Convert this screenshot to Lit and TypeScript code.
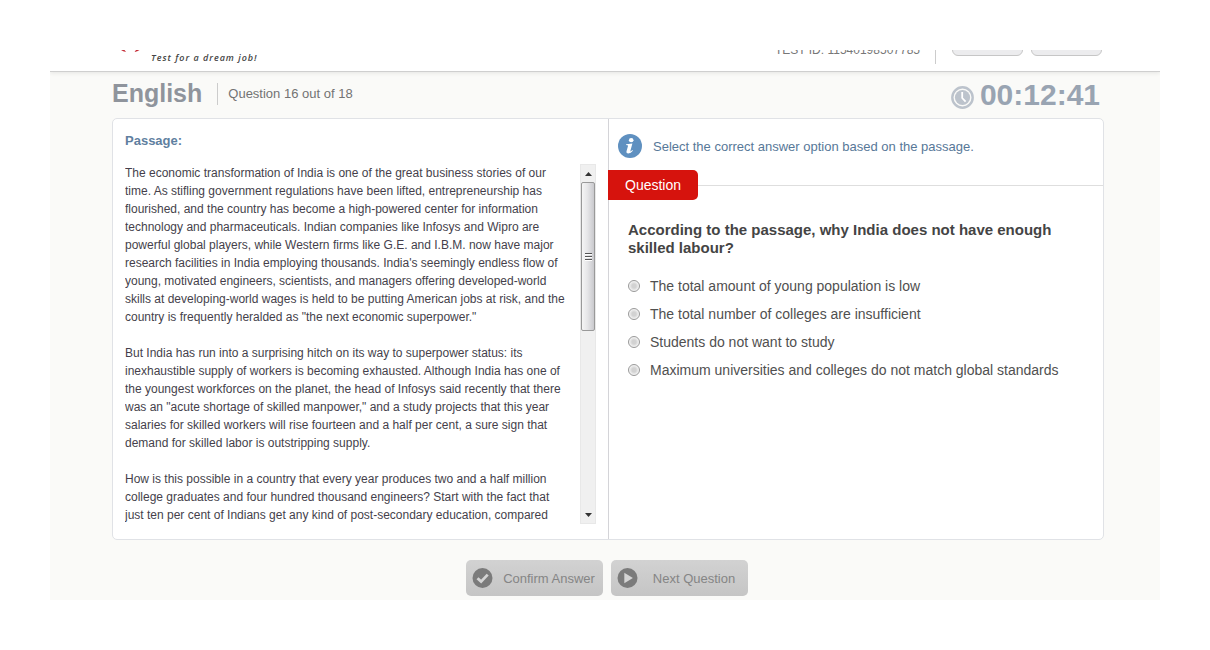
import { LitElement, html, css } from "lit";
import { customElement, state } from "lit/decorators.js";

const passage = [
  `The economic transformation of India is one of the great business stories of our
time. As stifling government regulations have been lifted, entrepreneurship has
flourished, and the country has become a high-powered center for information
technology and pharmaceuticals. Indian companies like Infosys and Wipro are
powerful global players, while Western firms like G.E. and I.B.M. now have major
research facilities in India employing thousands. India's seemingly endless flow of
young, motivated engineers, scientists, and managers offering developed-world
skills at developing-world wages is held to be putting American jobs at risk, and the
country is frequently heralded as "the next economic superpower."`,
  `But India has run into a surprising hitch on its way to superpower status: its
inexhaustible supply of workers is becoming exhausted. Although India has one of
the youngest workforces on the planet, the head of Infosys said recently that there
was an "acute shortage of skilled manpower," and a study projects that this year
salaries for skilled workers will rise fourteen and a half per cent, a sure sign that
demand for skilled labor is outstripping supply.`,
  `How is this possible in a country that every year produces two and a half million
college graduates and four hundred thousand engineers? Start with the fact that
just ten per cent of Indians get any kind of post-secondary education, compared`,
];

const options = [
  "The total amount of young population is low",
  "The total number of colleges are insufficient",
  "Students do not want to study",
  "Maximum universities and colleges do not match global standards",
];

@customElement("app-root")
class AppRoot extends LitElement {
  @state() private selected = -1;

  static styles = css`
    :host {
      display: block;
      min-height: 100vh;
      padding: 50px;
      box-sizing: border-box;
      background: #fff;
      font-family: "Liberation Sans", Arial, sans-serif;
      font-size: 13px;
      color: #444;
    }
    * { box-sizing: border-box; }
    button { font-family: inherit; border: 0; padding: 0; cursor: pointer; }
    svg { display: block; flex: none; }
    .frame { background: #fafaf8; overflow: hidden; }
    .top {
      display: flex;
      align-items: flex-end;
      height: 22px;
      padding: 0 58px 0 70px;
      overflow: hidden;
      background: #fff;
      border-bottom: 1px solid #cfcfcf;
      box-shadow: 0 1px 4px #e4e4e2;
    }
    .logo { align-self: flex-start; }
    .tagline {
      margin-left: 10px;
      padding-bottom: 6px;
      font: italic 600 9px/14px "Open Sans", sans-serif;
      letter-spacing: 1px;
      color: #444;
      flex: 1;
      white-space: nowrap;
    }
    .test-id {
      font-size: 12px;
      line-height: 14px;
      padding-bottom: 14px;
      color: #777;
      white-space: nowrap;
    }
    .rule { width: 1px; height: 30px; margin: 0 16px 7px 15px; background: #ccc; flex: none; }
    .tool {
      width: 71px;
      height: 26px;
      margin: 0 0 15px;
      flex: none;
      border: 1px solid #c6c6c6;
      border-radius: 6px;
      background: #ececee;
    }
    .tool + .tool { margin-left: 8px; }
    .body { padding: 0 56px 4px 62px; }
    .heading { display: flex; align-items: center; height: 46px; padding-right: 4px; }
    h1 { margin: 0; font-size: 25px; line-height: 30px; color: #8f949c; padding-bottom: 4px; }
    .count {
      margin-left: 15px;
      padding-left: 10px;
      border-left: 1px solid #ccc;
      line-height: 22px;
      margin-bottom: 2px;
      color: #737373;
      flex: 1;
    }
    .clock { margin: 4px 6px 0 0; }
    .time { font-size: 30px; font-weight: bold; line-height: 34px; color: #99a4b2; }
    .panel {
      display: grid;
      grid-template-columns: 1fr 1fr;
      background: #fff;
      border: 1px solid #e0e2e6;
      border-radius: 5px;
    }
    .left { padding: 14px 12px 15px; min-width: 0; }
    .left h2 { margin: 0 0 16px; font-size: 13px; line-height: 15px; color: #5f7fa0; }
    .scroller { display: flex; height: 360px; }
    .text { flex: 1; min-width: 0; overflow: hidden; font-size: 12px; line-height: 18px; color: #453f4b; }
    .text p { margin: 0 0 18px; white-space: pre-line; }
    .bar {
      width: 16px;
      display: flex;
      flex-direction: column;
      background: #f0f0f0;
      border: 1px solid #e8e8e8;
      flex: none;
    }
    .arrow { height: 17px; background: none; display: grid; place-items: center; }
    .thumb {
      height: 149px;
      border: 1px solid #999;
      border-radius: 2px;
      background: linear-gradient(90deg, #f5f5f5, #e6e6e8 45%, #c9c9cd);
      display: grid;
      place-items: center;
    }
    .track { flex: 1; }
    .right { border-left: 1px solid #d4d4d8; min-width: 0; }
    .info { display: flex; align-items: center; gap: 11px; padding: 15px 9px 12px; color: #577898; }
    .divider { display: flex; align-items: center; }
    .divider::after { content: ""; flex: 1; height: 1px; background: #dedede; }
    .tag {
      margin-left: -1px;
      padding: 0 17px;
      font-size: 14px;
      line-height: 30px;
      color: #fff;
      background: #d6130d;
      border-radius: 0 5px 5px 0;
    }
    fieldset { border: 0; margin: 0; padding: 0 19px; min-width: 0; }
    legend { padding: 21px 0 15px; font-size: 15px; line-height: 18px; font-weight: bold; color: #444; }
    .option { display: flex; align-items: center; height: 28px; font-size: 14px; color: #505050; }
    .option input {
      appearance: none;
      width: 12px;
      height: 12px;
      margin: 0 10px 0 0;
      flex: none;
      border: 1px solid #999;
      border-radius: 50%;
      background: radial-gradient(circle, #d2d2d2 0 2px, #dedede 3px, #f6f6f6 5px);
    }
    .option input:checked { background: radial-gradient(circle, #444 0 2px, #eee 3px); }
    .actions { display: flex; justify-content: center; gap: 8px; padding: 20px 2px 0 0; }
    .action {
      display: flex;
      align-items: center;
      width: 137px;
      height: 36px;
      padding: 0 6px;
      border-radius: 5px;
      background: linear-gradient(#d2d2d2, #c5c5c5);
      color: #858585;
      font-size: 13px;
      white-space: nowrap;
    }
    .action span { flex: 1; text-align: center; padding-left: 8px; }
  `;

  private scrollText(by: number) {
    this.renderRoot.querySelector(".text")?.scrollBy(0, by);
  }

  render() {
    return html`
      <div class="frame">
        <header class="top">
          <svg class="logo" width="21" height="3" viewBox="0 0 21 3">
            <path d="M1 0h3.5l1.5 2Q3 1.6 1 0zM19.500 0h-3.500l-1.500 2q3-.4 5-2z" fill="#c42b35" />
          </svg>
          <div class="tagline">Test for a dream job!</div>
          <div class="test-id">TEST ID: 11540198507785</div>
          <div class="rule"></div>
          <button class="tool"></button>
          <button class="tool"></button>
        </header>
        <main class="body">
          <div class="heading">
            <h1>English</h1>
            <div class="count">Question 16 out of 18</div>
            <svg class="clock" width="23" height="23" viewBox="0 0 23 23">
              <circle cx="11.5" cy="11.5" r="10.2" fill="#fafaf8" stroke="#bcc3cc" stroke-width="2.4" />
              <circle cx="11.5" cy="11.5" r="7.6" fill="#bcc3cc" />
              <path d="M11.2 6v6l3.4 3.6" fill="none" stroke="#fff" stroke-width="1.8" />
            </svg>
            <div class="time">00:12:41</div>
          </div>
          <div class="panel">
            <section class="left">
              <h2>Passage:</h2>
              <div class="scroller">
                <div class="text">${passage.map((p) => html`<p>${p}</p>`)}</div>
                <div class="bar">
                  <button class="arrow" aria-label="Scroll up" @click=${() => this.scrollText(-18)}>
                    <svg width="7" height="4" viewBox="0 0 7 4"><path d="M3.5 0L7 4H0z" fill="#333" /></svg>
                  </button>
                  <div class="thumb">
                    <svg width="7" height="8" viewBox="0 0 7 8">
                      <path d="M0 .5h7M0 3.5h7M0 6.5h7" stroke="#555" />
                      <path d="M0 1.5h7M0 4.5h7M0 7.5h7" stroke="#fff" />
                    </svg>
                  </div>
                  <div class="track"></div>
                  <button class="arrow" aria-label="Scroll down" @click=${() => this.scrollText(18)}>
                    <svg width="7" height="4" viewBox="0 0 7 4"><path d="M0 0h7L3.5 4z" fill="#333" /></svg>
                  </button>
                </div>
              </div>
            </section>
            <section class="right">
              <div class="info">
                <svg width="24" height="24" viewBox="0 0 24 24">
                  <circle cx="12" cy="12" r="12" fill="#5f90c0" />
                  <ellipse cx="13.2" cy="6.2" rx="2.3" ry="2.1" fill="#fff" />
                  <path d="M8.2 10.2l6.2-.7-2 7.2q-.2.9.5.6l1.5-1.2.5.7q-2.1 2.6-4.6 2.6-2.3-.1-1.8-2.2l1.5-5.1q.2-.9-.6-.9l-1.4-.1z" fill="#fff" />
                </svg>
                <span>Select the correct answer option based on the passage.</span>
              </div>
              <div class="divider"><div class="tag">Question</div></div>
              <fieldset>
                <legend>According to the passage, why India does not have enough skilled labour?</legend>
                ${options.map(
                  (o, i) => html`<label class="option">
                    <input type="radio" name="answer" .checked=${this.selected === i} @change=${() => (this.selected = i)} />
                    ${o}
                  </label>`
                )}
              </fieldset>
            </section>
          </div>
          <div class="actions">
            <button class="action">
              <svg width="21" height="20" viewBox="0 0 21 20">
                <circle cx="10.5" cy="10" r="10" fill="#7b7b7b" />
                <path d="M5.500 10.200l3.600 3.400 6.600-7" fill="none" stroke="#d4d4d4" stroke-width="2.8" />
              </svg>
              <span>Confirm Answer</span>
            </button>
            <button class="action">
              <svg width="21" height="20" viewBox="0 0 21 20">
                <circle cx="10.5" cy="10" r="10" fill="#7b7b7b" />
                <path d="M7.300 4.800l8.600 5.200-8.600 5.200z" fill="#d4d4d4" />
              </svg>
              <span>Next Question</span>
            </button>
          </div>
        </main>
      </div>
    `;
  }
}
